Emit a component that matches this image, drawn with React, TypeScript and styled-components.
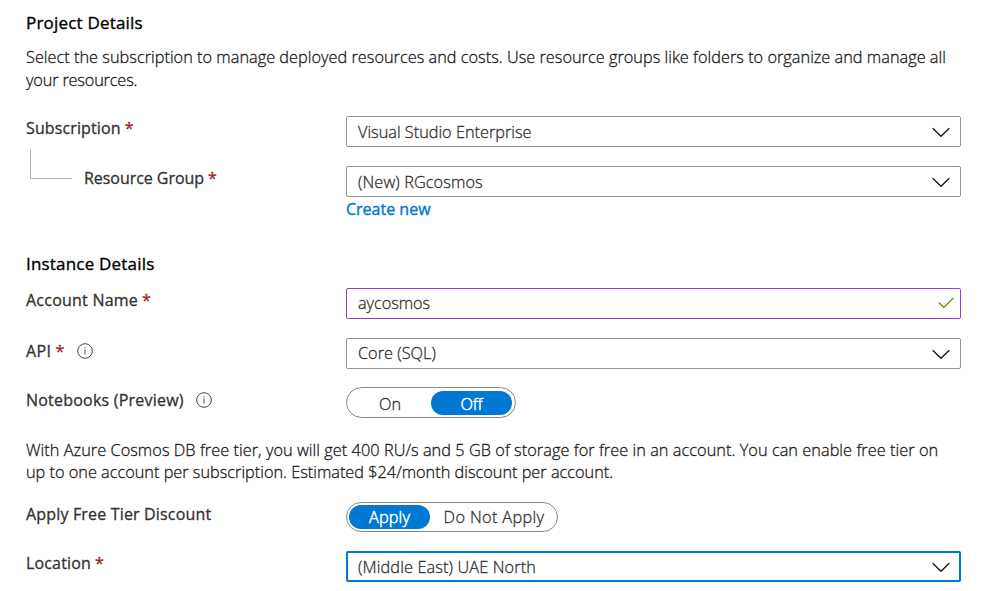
import React from "react";
import styled, { createGlobalStyle, css } from "styled-components";

const GlobalStyle = createGlobalStyle`
  *, *::before, *::after { box-sizing: border-box; }
  body {
    margin: 0;
    background: #fff;
    color: #323130;
    font-family: "Open Sans", "Noto Sans", sans-serif;
    font-size: 16px;
  }
`;

const regularText = css`
  font-size: 16.3px;
  font-weight: 300;
  -webkit-text-stroke: 0.3px currentColor;
`;

const Page = styled.main`
  width: 989px;
  height: 591px;
  padding: 11px 0 0 26px;
  overflow: hidden;
`;

const Heading = styled.h2<{ $space?: number }>`
  margin: 0 0 ${(p) => p.$space ?? 0}px;
  height: 24px;
  font-size: 17px;
  font-weight: 500;
  line-height: 23px;
  letter-spacing: 0.19px;
  color: #000;
  -webkit-text-stroke: 0.35px currentColor;
`;

const Paragraph = styled.p<{ $leading: number }>`
  ${regularText}
  margin: 0;
  color: #1b1a19;
  line-height: ${(p) => p.$leading}px;
  white-space: nowrap;
`;

const Line = styled.span<{ $tracking: number }>`
  display: block;
  letter-spacing: ${(p) => p.$tracking}px;
`;

const Intro = styled.div`
  padding-top: 11px;
  height: 81px;
`;

const Notice = styled.div`
  padding-top: 21px;
  height: 84px;
`;

const Row = styled.div<{ $height: number }>`
  display: grid;
  grid-template-columns: 320px 615px;
  align-items: start;
  height: ${(p) => p.$height}px;
`;

const LabelCell = styled.div<{ $drop?: number }>`
  display: flex;
  align-items: center;
  height: 24px;
  margin-top: ${(p) => p.$drop ?? 0}px;
`;

const LabelText = styled.label<{ $tracking?: number }>`
  font-weight: 500;
  line-height: 24px;
  letter-spacing: ${(p) => p.$tracking ?? 0}px;
  white-space: nowrap;
  -webkit-text-stroke: 0.3px currentColor;
`;

const Required = styled.span`
  margin-left: 4px;
  font-size: 16px;
  line-height: 24px;
  color: #a4262c;
  -webkit-text-stroke: 0.4px currentColor;
`;

const InfoSvg = styled.svg<{ $gap: number }>`
  flex: none;
  margin: -1px 0 0 ${(p) => p.$gap}px;
`;

const Branch = styled.div`
  width: 42px;
  height: 30px;
  margin: -28px 12px 0 4px;
  border: solid #b3b0ad;
  border-width: 0 0 1px 1px;
`;

const tones = {
  normal: css`border: 1px solid #979593;`,
  edited: css`border: 1px solid #9a42bb;`,
  focused: css`border: 2px solid #0078d4; padding: 0 9px 0 10px;`,
};

const Field = styled.div<{ $tone: keyof typeof tones }>`
  display: flex;
  align-items: center;
  justify-content: space-between;
  height: 31px;
  padding: 0 10px 0 11px;
  border-radius: 2px;
  background: #fff;
  ${(p) => tones[p.$tone]}
`;

const Value = styled.span<{ $tracking?: number; $drop?: number }>`
  ${regularText}
  line-height: 24px;
  letter-spacing: ${(p) => p.$tracking ?? 0}px;
  padding-top: ${(p) => p.$drop ?? 1}px;
`;

const RaisedValue = styled(Value)`
  padding-top: 0;
  margin-top: -1px;
`;

const CreateLink = styled.a`
  display: block;
  font-size: 16px;
  font-weight: 500;
  line-height: 24px;
  color: #0078d4;
  -webkit-text-stroke: 0.4px currentColor;
`;

const Switch = styled.div<{ $width: number; $height: number }>`
  display: flex;
  align-items: center;
  width: ${(p) => p.$width}px;
  height: ${(p) => p.$height}px;
  padding: 0 2px;
  border: 1px solid #8a8886;
  border-radius: 16px;
`;

const Option = styled.span<{ $width: number; $on?: boolean; $tracking?: number; $drop?: number }>`
  ${regularText}
  display: flex;
  flex: none;
  align-items: center;
  justify-content: center;
  width: ${(p) => p.$width}px;
  height: 24px;
  padding-top: ${(p) => p.$drop ?? 0}px;
  border-radius: 12px;
  letter-spacing: ${(p) => p.$tracking ?? 0}px;
  white-space: nowrap;
  ${(p) =>
    p.$on &&
    css`
      background: #0078d4;
      color: #fff;
      -webkit-text-stroke: 0.5px currentColor;
    `}
`;

const ChevronSvg = styled.svg`
  margin-top: 1px;
`;

const CheckSvg = styled.svg`
  margin: 0 -4px 1px 0;
`;

const Chevron = () => (
  <ChevronSvg width="18" height="11" viewBox="0 0 18 11" fill="none" stroke="#1b1a19" strokeWidth="1.4">
    <path d="M0.7 1.2 L9 9.2 L17.3 1.2" />
  </ChevronSvg>
);

const Check = () => (
  <CheckSvg width="16" height="12" viewBox="0 0 16 12" fill="none" stroke="#57a300" strokeWidth="1.4">
    <path d="M0.8 5.6 L5.8 10.4 L15.3 1" />
  </CheckSvg>
);

const Info = ({ gap }: { gap: number }) => (
  <InfoSvg $gap={gap} width="16" height="16" viewBox="0 0 16 16" fill="none" stroke="#484644">
    <circle cx="8" cy="8" r="7.3" />
    <path d="M8 6.6 V11.5 M8 4.2 V5.4" />
  </InfoSvg>
);

type LabelProps = {
  text: string;
  tracking?: number;
  required?: boolean;
  infoGap?: number;
  nested?: boolean;
  drop?: number;
};

const Label = ({ text, tracking, required, infoGap, nested, drop }: LabelProps) => (
  <LabelCell $drop={drop}>
    {nested && <Branch />}
    <LabelText $tracking={tracking}>{text}</LabelText>
    {required && <Required>*</Required>}
    {infoGap !== undefined && <Info gap={infoGap} />}
  </LabelCell>
);

type SelectProps = { value: string; tracking?: number; focused?: boolean; raised?: boolean };

const Select = ({ value, tracking, focused, raised }: SelectProps) => {
  const Text = raised ? RaisedValue : Value;
  return (
    <Field $tone={focused ? "focused" : "normal"}>
      <Text $tracking={tracking}>{value}</Text>
      <Chevron />
    </Field>
  );
};

export default function App() {
  return (
    <>
      <GlobalStyle />
      <Page>
        <Heading>Project Details</Heading>
        <Intro>
          <Paragraph $leading={23}>
            <Line $tracking={0.022}>
              Select the subscription to manage deployed resources and costs. Use resource groups like folders to organize and manage all
            </Line>
            <Line $tracking={-0.16}>your resources.</Line>
          </Paragraph>
        </Intro>
        <Row $height={50}>
          <Label text="Subscription" tracking={0.12} required />
          <Select value="Visual Studio Enterprise" />
        </Row>
        <Row $height={86}>
          <Label text="Resource Group" tracking={-0.05} required nested />
          <div>
            <Select value="(New) RGcosmos" tracking={0.1} />
            <CreateLink>Create new</CreateLink>
          </div>
        </Row>
        <Heading $space={12}>Instance Details</Heading>
        <Row $height={50}>
          <Label text="Account Name" tracking={0.23} required />
          <Field $tone="edited">
            <RaisedValue $tracking={-0.05}>aycosmos</RaisedValue>
            <Check />
          </Field>
        </Row>
        <Row $height={49}>
          <Label text="API" tracking={0.4} required infoGap={13} drop={1} />
          <Select value="Core (SQL)" tracking={0.02} raised />
        </Row>
        <Row $height={31}>
          <Label text="Notebooks (Preview)" tracking={0.22} infoGap={12} drop={1} />
          <Switch $width={170} $height={31}>
            <Option $width={82} $drop={2}>On</Option>
            <Option $width={81} $drop={2} $on>Off</Option>
          </Switch>
        </Row>
        <Notice>
          <Paragraph $leading={22}>
            <Line $tracking={0.052}>
              With Azure Cosmos DB free tier, you will get 400 RU/s and 5 GB of storage for free in an account. You can enable free tier on
            </Line>
            <Line $tracking={0.002}>up to one account per subscription. Estimated $24/month discount per account.</Line>
          </Paragraph>
        </Notice>
        <Row $height={49}>
          <Label text="Apply Free Tier Discount" tracking={0.17} />
          <Switch $width={212} $height={30}>
            <Option $width={81} $tracking={0.15} $on>Apply</Option>
            <Option $width={128} $tracking={0.35}>Do Not Apply</Option>
          </Switch>
        </Row>
        <Row $height={31}>
          <Label text="Location" tracking={0.15} required />
          <Select value="(Middle East) UAE North" tracking={0.13} focused />
        </Row>
      </Page>
    </>
  );
}
